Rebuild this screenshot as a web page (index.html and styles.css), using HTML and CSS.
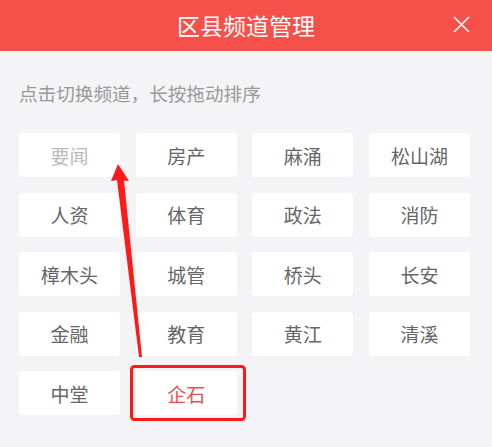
FILE: index.html
```html
<!DOCTYPE html>
<html lang="zh">
<head>
<meta charset="utf-8">
<title>区县频道管理</title>
<link rel="stylesheet" href="styles.css">
</head>
<body>
<div class="page">
  <header class="header">
    <h1 class="title">区县频道管理</h1>
    <button class="close" aria-label="关闭">
      <svg width="17" height="17" viewBox="0 0 17 17"><path d="M1 1 L16 16 M16 1 L1 16" stroke="#fff" stroke-width="1.6" fill="none"/></svg>
    </button>
  </header>
  <p class="hint">点击切换频道，长按拖动排序</p>
  <div class="grid">
    <div class="chip chip-disabled">要闻</div>
    <div class="chip">房产</div>
    <div class="chip">麻涌</div>
    <div class="chip">松山湖</div>
    <div class="chip">人资</div>
    <div class="chip">体育</div>
    <div class="chip">政法</div>
    <div class="chip">消防</div>
    <div class="chip">樟木头</div>
    <div class="chip">城管</div>
    <div class="chip">桥头</div>
    <div class="chip">长安</div>
    <div class="chip">金融</div>
    <div class="chip">教育</div>
    <div class="chip">黄江</div>
    <div class="chip">清溪</div>
    <div class="chip">中堂</div>
    <div class="chip chip-active">企石</div>
  </div>
  <svg class="annot" viewBox="0 0 492 447" width="492" height="447">
    <rect x="131.5" y="366.5" width="113" height="53" rx="3" fill="none" stroke="#ff1a1a" stroke-width="3"/>
    <polygon points="118,164 129,181 124,180.5 142,357 139,357 117,180 111,181" fill="#ff1a1a"/>
  </svg>
</div>
</body>
</html>
```
FILE: styles.css
```css
html, body {
  margin: 0;
  padding: 0;
}
body {
  background: #f4f4f6;
  font-family: "Noto Sans CJK SC", "Noto Sans", sans-serif;
}
.page {
  position: relative;
  width: 492px;
  height: 447px;
  overflow: hidden;
}
.header {
  height: 51px;
  background: #f5514a;
  display: flex;
  align-items: center;
  justify-content: center;
  position: relative;
}
.title {
  margin: 0;
  color: #fff;
  font-size: 23px;
  font-weight: 400;
  line-height: 51px;
}
.close {
  position: absolute;
  right: 22px;
  top: 16px;
  width: 17px;
  height: 17px;
  padding: 0;
  border: 0;
  background: none;
  display: flex;
}
.hint {
  margin: 0;
  padding: 29px 0 0 19px;
  height: 53px;
  box-sizing: border-box;
  color: #999;
  font-size: 18.6px;
  line-height: 26px;
}
.grid {
  margin-top: 29px;
  padding-left: 19px;
  display: grid;
  grid-template-columns: repeat(4, 101px);
  column-gap: 15.7px;
  row-gap: 15.5px;
}
.chip {
  height: 44px;
  background: #fff;
  border-radius: 4px;
  display: flex;
  align-items: center;
  justify-content: center;
  color: #666;
  font-size: 19px;
}
.chip-disabled {
  color: #bbb;
}
.chip-active {
  color: #e5534f;
}
.annot {
  position: absolute;
  left: 0;
  top: 0;
  pointer-events: none;
}
```
